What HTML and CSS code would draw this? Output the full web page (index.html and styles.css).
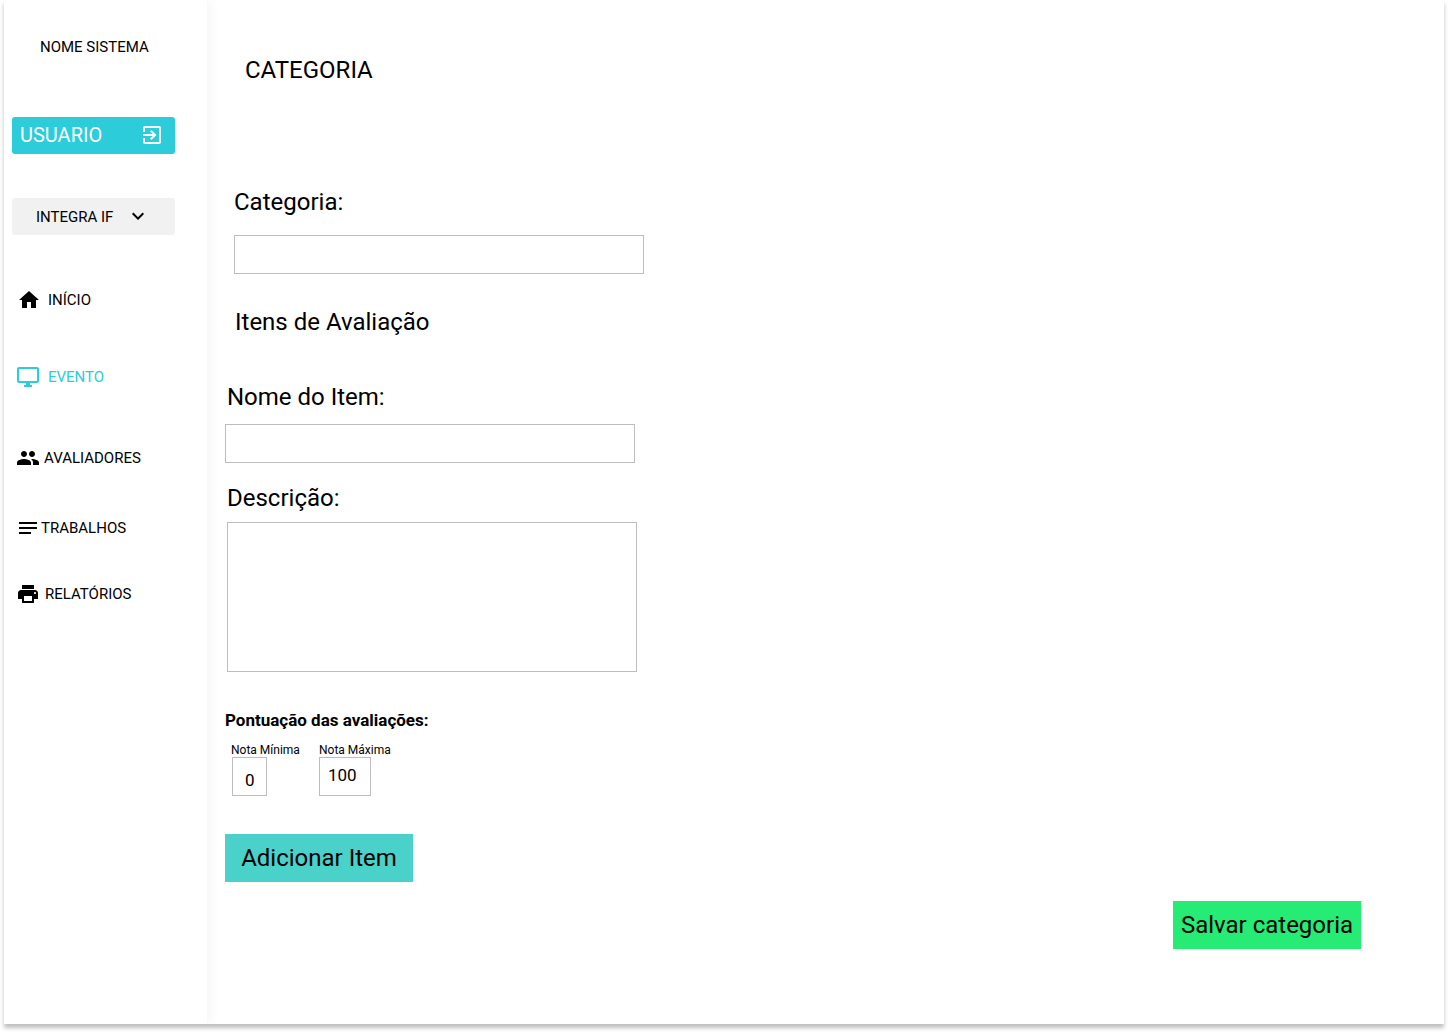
FILE: index.html
```html
<!DOCTYPE html>
<html lang="pt-BR">
<head>
<meta charset="utf-8">
<title>Categoria</title>
<link rel="stylesheet" href="styles.css">
</head>
<body>
<div class="frame">
  <aside class="sidebar">
    <div class="brand">NOME SISTEMA</div>
    <div class="user"><span class="user-name">USUARIO</span>
      <svg class="icon" viewBox="0 0 24 24"><path d="M10.09 15.59L11.5 17l5-5-5-5-1.41 1.41L12.67 11H3v2h9.67l-2.58 2.59zM19 3H5c-1.11 0-2 .9-2 2v4h2V5h14v14H5v-4H3v4c0 1.1.89 2 2 2h14c1.1 0 2-.9 2-2V5c0-1.1-.9-2-2-2z"/></svg>
    </div>
    <div class="picker"><span class="picker-name">INTEGRA IF</span>
      <svg class="icon" viewBox="0 0 24 24"><path d="M7.41 8.59L12 13.17l4.59-4.58L18 10l-6 6-6-6 1.41-1.41z"/></svg>
    </div>
    <nav class="nav">
      <a class="item home"><svg class="icon" viewBox="0 0 24 24"><path d="M10 20v-6h4v6h5v-8h3L12 3 2 12h3v8z"/></svg><span>INÍCIO</span></a>
      <a class="item event"><svg class="icon" viewBox="0 0 24 24"><path d="M21 2H3c-1.100 0-2 .9-2 2v12c0 1.100.9 2 2 2h7v2H8v2h8v-2h-2v-2h7c1.100 0 2-.9 2-2V4c0-1.100-.9-2-2-2zm0 14H3V4h18v12z"/></svg><span>EVENTO</span></a>
      <a class="item people"><svg class="icon" viewBox="0 0 24 24"><path d="M16 11c1.660 0 2.990-1.340 2.990-3S17.660 5 16 5c-1.660 0-3 1.340-3 3s1.340 3 3 3zm-8 0c1.660 0 2.990-1.340 2.990-3S9.660 5 8 5C6.340 5 5 6.340 5 8s1.340 3 3 3zm0 2c-2.330 0-7 1.170-7 3.500V19h14v-2.500c0-2.330-4.670-3.500-7-3.500zm8 0c-.29 0-.62.020-.97.050 1.160.84 1.970 1.970 1.970 3.450V19h6v-2.500c0-2.330-4.670-3.500-7-3.500z"/></svg><span>AVALIADORES</span></a>
      <a class="item works"><svg class="icon" viewBox="0 0 24 24"><path d="M3 18h12v-2H3v2zM3 6v2h18V6H3zm0 7h18v-2H3v2z"/></svg><span>TRABALHOS</span></a>
      <a class="item reports"><svg class="icon" viewBox="0 0 24 24"><path d="M19 8H5c-1.660 0-3 1.340-3 3v6h4v4h12v-4h4v-6c0-1.660-1.340-3-3-3zm-3 11H8v-5h8v5zm3-7c-.55 0-1-.45-1-1s.45-1 1-1 1 .45 1 1-.45 1-1 1zm-1-9H6v4h12V3z"/></svg><span>RELATÓRIOS</span></a>
    </nav>
  </aside>
  <main class="main">
    <h1 class="title">CATEGORIA</h1>
    <label class="label category-label" for="category">Categoria:</label>
    <input class="field category-field" id="category">
    <h2 class="label items-label">Itens de Avaliação</h2>
    <label class="label name-label" for="name">Nome do Item:</label>
    <input class="field name-field" id="name">
    <label class="label desc-label" for="desc">Descrição:</label>
    <textarea class="field desc-field" id="desc"></textarea>
    <h3 class="score-title">Pontuação das avaliações:</h3>
    <div class="scores">
      <div class="score min"><span class="score-label">Nota Mínima</span><div class="score-box">0</div></div>
      <div class="score max"><span class="score-label">Nota Máxima</span><div class="score-box">100</div></div>
    </div>
    <button class="button add">Adicionar Item</button>
    <button class="button save">Salvar categoria</button>
  </main>
</div>
</body>
</html>
```
FILE: styles.css
```css
* { box-sizing: border-box; }
body { margin: 0; min-height: 1032px; background: #fff; color: #000; font-family: Roboto, sans-serif; }
.frame { display: flex; width: 1440px; height: 1024px; margin: 0 4px; background: #fff; box-shadow: 0 4px 4px rgba(0, 0, 0, .25); }
.sidebar { flex: none; width: 203px; padding: 37px 8px 0; font-size: 15px; line-height: 20px; white-space: nowrap; box-shadow: 4px 0 10px rgba(0, 0, 0, .04); clip-path: inset(0 -20px 0 0); }
.icon { flex: none; display: block; width: 24px; height: 24px; fill: currentColor; }
.brand { height: 20px; padding-left: 28px; }
.user, .picker { display: flex; align-items: center; width: 163px; height: 37px; border-radius: 3px; }
.user { margin-top: 60px; padding: 0 11px 1px 8px; justify-content: space-between; background: #2cccda; color: #fff; font-size: 20px; }
.picker { margin-top: 44px; padding: 0 0 1px 24px; background: #f1f1f1; }
.picker-name { width: 90px; padding-top: 1px; }
.nav { display: flex; flex-direction: column; margin-top: 53px; }
.item { display: flex; align-items: center; height: 24px; padding-left: 4px; }
.home { padding-left: 5px; gap: 7px; }
.event { margin-top: 53px; gap: 8px; color: #2cccda; }
.people { margin-top: 57px; gap: 4px; }
.works { margin-top: 46px; gap: 1px; }
.reports { margin-top: 42px; gap: 5px; }
.main { display: flex; flex-direction: column; align-items: flex-start; flex: 1; padding: 56px 83px 0 18px; }
.title, .label, .score-title { margin: 0; font-weight: 400; white-space: nowrap; }
.title, .label { height: 28px; font-size: 24px; line-height: 28px; }
.title { margin-left: 20px; }
.field { display: block; width: 410px; height: 39px; margin: 0; padding: 8px; border: 1px solid #bdbdbd; border-radius: 0; background: #fff; font: 16px Roboto, sans-serif; outline: 0; resize: none; }
.category-label { margin: 104px 0 0 9px; }
.category-field { margin: 19px 0 0 9px; }
.items-label { margin: 34px 0 0 10px; }
.name-label { margin: 47px 0 0 2px; }
.name-field { margin-top: 13px; }
.desc-label { margin: 21px 0 0 2px; }
.desc-field { height: 150px; margin: 10px 0 0 2px; }
.score-title { height: 20px; margin-top: 38px; font-size: 17px; font-weight: 700; line-height: 20px; }
.scores { display: flex; gap: 18px; margin: 13px 0 0 6px; }
.score-label { display: block; height: 14px; font-size: 12px; line-height: 14px; }
.score-box { height: 39px; border: 1px solid #bdbdbd; font-size: 17px; }
.min { width: 70px; }
.min .score-box { width: 35px; margin-left: 1px; padding: 4px 0 0 12px; line-height: 37px; }
.max .score-box { width: 52px; padding-left: 8px; line-height: 35px; }
.button { height: 48px; width: 188px; padding: 0; border: 0; font: 24px/48px Roboto, sans-serif; color: #000; white-space: nowrap; }
.add { margin-top: 38px; background: #4ad1ca; }
.save { align-self: flex-end; margin-top: 19px; background: #26eb75; }
```
